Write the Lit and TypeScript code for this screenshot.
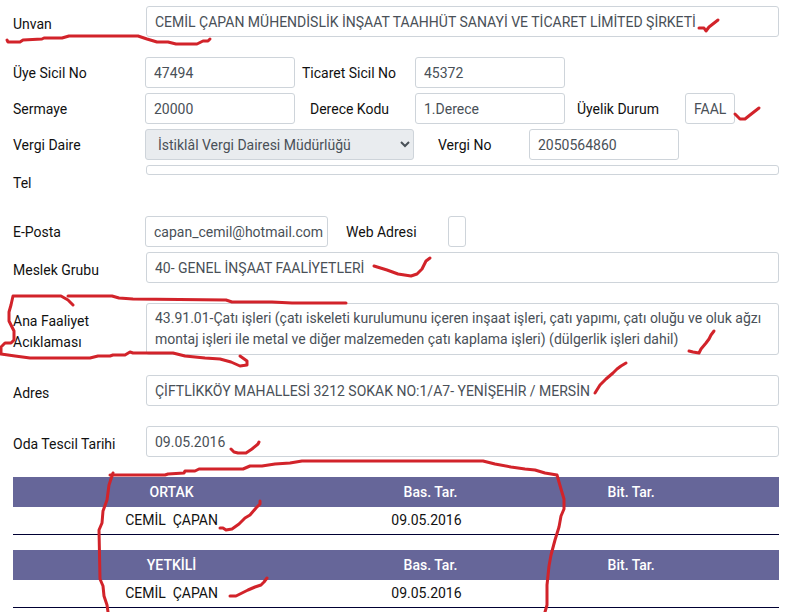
import { LitElement, html, css, svg } from "lit";

interface Person {
  name: string;
  start: string;
  end: string;
}

// Pen marks laid over the form, as polylines in page coordinates.
const MARKS = [
  "7,40 8,42 20,42 23,40 42,39 44,38 62,38 69,36 138,36 147,39 157,42 168,42 176,44 197,44 203,41 208,41 210,39",
  "699,28 704,28 706,31 709,27 718,20",
  "735,114 740,119 745,119 750,115 759,108",
  "374,266 387,270 398,274 411,276 417,274 422,269 424,265 426,261 430,258",
  "73,305 68,300 61,296 13,296 11,305 9,312 9,321 14,331 14,340 11,343 5,343 1,347 1,354 15,356 30,358 90,358 98,356 110,356 113,355 125,355 130,352 133,353 173,353 185,356 205,358 220,359 231,362 240,366 247,365 247,361 240,356",
  "68,296 112,296 119,298 133,299 226,300 232,302 272,302 292,303 346,303",
  "689,351 693,352 699,353 701,349 706,343 709,339 711,335 714,331",
  "595,393 600,385 606,379 613,373 617,369 621,366 626,363",
  "231,449 234,452 238,453 246,453 252,449 258,444 259,442",
  "220,528 223,528 226,530 232,529 239,524 245,518 250,515 256,508 260,504 260,501",
  "230,596 236,596 242,593 248,590 255,587 261,585 264,582 267,578",
  "110,475 165,475 168,474 184,473 185,471 195,471 199,469 243,469 250,466 262,466 275,464 290,463 302,461 483,461 495,464 511,467 525,469 535,470 545,473 557,475 561,489 564,499 564,509 561,516 559,527 555,540 551,555 549,566 547,585 547,605 545,612",
  "113,473 109,485 107,500 103,511 102,523 99,530 100,579 103,586 104,596 107,605 108,612",
];

class AppRoot extends LitElement {
  static properties = {
    partners: { attribute: false },
    officers: { attribute: false },
  };

  declare partners: Person[];
  declare officers: Person[];

  constructor() {
    super();
    this.partners = [{ name: "CEMİL\u00a0 ÇAPAN", start: "09.05.2016", end: "" }];
    this.officers = [{ name: "CEMİL\u00a0 ÇAPAN", start: "09.05.2016", end: "" }];
  }

  static styles = css`
    :host {
      display: block;
      position: relative;
      overflow: hidden;
      background: #fff;
      color: #111;
      font: 14px/21px Roboto, "Liberation Sans", sans-serif;
    }
    * {
      box-sizing: border-box;
    }
    form {
      display: flex;
      flex-direction: column;
      gap: 20px;
      padding: 6px 7px 20px 13px;
    }
    .group {
      display: flex;
      flex-direction: column;
      gap: 5px;
    }
    .row {
      display: grid;
      grid-template-columns: 133px 1fr;
      align-items: start;
      min-height: 31px;
    }
    .row > label {
      padding: 8px 20px 0 0;
      margin-bottom: -8px;
    }
    .inline {
      display: flex;
      align-items: center;
    }
    .inline > label {
      padding-top: 2px;
    }
    .first {
      width: 132px;
    }
    .near {
      width: 120px;
      padding-left: 7px;
    }
    .mid {
      width: 120px;
      padding-left: 15px;
    }
    .far {
      width: 120px;
      padding-left: 12px;
    }
    .tax {
      width: 115px;
      padding-left: 24px;
    }
    .web {
      width: 120px;
      padding-left: 18px;
    }
    input,
    textarea,
    select {
      display: block;
      width: 100%;
      height: 31px;
      margin: 0;
      padding: 4px 4px 4px 8px;
      border: 1px solid #ced4da;
      border-radius: 3px;
      background: #fff;
      color: #495057;
      font: inherit;
      outline: none;
    }
    textarea {
      height: 52px;
      resize: none;
      overflow: hidden;
    }
    select {
      width: 269px;
      background: #e9ecef;
    }
    .short {
      width: 150px;
    }
    .mail {
      width: 183px;
    }
    .state {
      width: 50px;
    }
    .tiny {
      width: 18px;
    }
    .slim {
      height: 10px;
    }
    .tables {
      display: flex;
      flex-direction: column;
      gap: 15px;
      padding: 0 7px 4px 13px;
    }
    table {
      width: 100%;
      table-layout: fixed;
      border-collapse: separate;
      border-spacing: 0;
      text-align: center;
    }
    th {
      height: 30px;
      padding: 0;
      background: #666699;
      color: #fff;
      font-weight: 500;
    }
    td {
      height: 28px;
      padding: 0 8px 0 0;
      border-bottom: 1px solid #000033;
    }
    td:first-child {
      padding: 0;
    }
    .who {
      width: 41.4%;
    }
    .date {
      width: 26.2%;
    }
    .marks {
      position: absolute;
      top: 0;
      left: 0;
      width: 786px;
      height: 612px;
      pointer-events: none;
      fill: none;
      stroke: #d2232a;
      stroke-width: 3;
      stroke-linecap: round;
      stroke-linejoin: round;
    }
  `;

  private people(title: string, rows: Person[]) {
    return html`
      <table>
        <colgroup>
          <col class="who" />
          <col class="date" />
          <col class="date" />
          <col />
        </colgroup>
        <thead>
          <tr>
            <th scope="col">${title}</th>
            <th scope="col">Bas. Tar.</th>
            <th scope="col">Bit. Tar.</th>
            <th></th>
          </tr>
        </thead>
        <tbody>
          ${rows.map(
            (p) => html`<tr>
              <td>${p.name}</td>
              <td>${p.start}</td>
              <td>${p.end}</td>
              <td></td>
            </tr>`
          )}
        </tbody>
      </table>
    `;
  }

  render() {
    return html`
      <form>
        <div class="row">
          <label for="title">Unvan</label>
          <input id="title" value="CEMİL ÇAPAN MÜHENDİSLİK İNŞAAT TAAHHÜT SANAYİ VE TİCARET LİMİTED ŞİRKETİ" />
        </div>
        <div class="group">
          <div class="inline">
            <label class="first" for="member">Üye Sicil No</label>
            <input class="short" id="member" value="47494" />
            <label class="near" for="trade">Ticaret Sicil No</label>
            <input class="short" id="trade" value="45372" />
          </div>
          <div class="inline">
            <label class="first" for="capital">Sermaye</label>
            <input class="short" id="capital" value="20000" />
            <label class="mid" for="degree">Derece Kodu</label>
            <input class="short" id="degree" value="1.Derece" />
            <label class="far" for="status">Üyelik Durum</label>
            <input class="state" id="status" value="FAAL" />
          </div>
          <div class="inline">
            <label class="first" for="office">Vergi Daire</label>
            <select id="office">
              <option>İstiklâl Vergi Dairesi Müdürlüğü</option>
            </select>
            <label class="tax" for="taxno">Vergi No</label>
            <input class="short" id="taxno" value="2050564860" />
          </div>
          <div class="row">
            <label for="phone">Tel</label>
            <input class="slim" id="phone" />
          </div>
        </div>
        <div class="group">
          <div class="inline">
            <label class="first" for="mail">E-Posta</label>
            <input class="mail" id="mail" value="capan_cemil@hotmail.com" />
            <label class="web" for="web">Web Adresi</label>
            <input class="tiny" id="web" />
          </div>
          <div class="row">
            <label for="group">Meslek Grubu</label>
            <input id="group" value="40- GENEL İNŞAAT FAALİYETLERİ" />
          </div>
        </div>
        <div class="row">
          <label for="activity">Ana Faaliyet Acıklaması</label>
          <textarea id="activity" .value=${"43.91.01-Çatı işleri (çatı iskeleti kurulumunu içeren inşaat işleri, çatı yapımı, çatı oluğu ve oluk ağzı montaj işleri ile metal ve diğer malzemeden çatı kaplama işleri) (dülgerlik işleri dahil)"}></textarea>
        </div>
        <div class="row">
          <label for="address">Adres</label>
          <input id="address" value="ÇİFTLİKKÖY MAHALLESİ 3212 SOKAK NO:1/A7- YENİŞEHİR / MERSİN" />
        </div>
        <div class="row">
          <label for="registered">Oda Tescil Tarihi</label>
          <input id="registered" value="09.05.2016" />
        </div>
      </form>
      <div class="tables">
        ${this.people("ORTAK", this.partners)}
        ${this.people("YETKİLİ", this.officers)}
      </div>
      <svg class="marks" viewBox="0 0 786 612" aria-hidden="true">
        ${MARKS.map((points) => svg`<polyline points=${points} />`)}
      </svg>
    `;
  }
}

customElements.define("app-root", AppRoot);
